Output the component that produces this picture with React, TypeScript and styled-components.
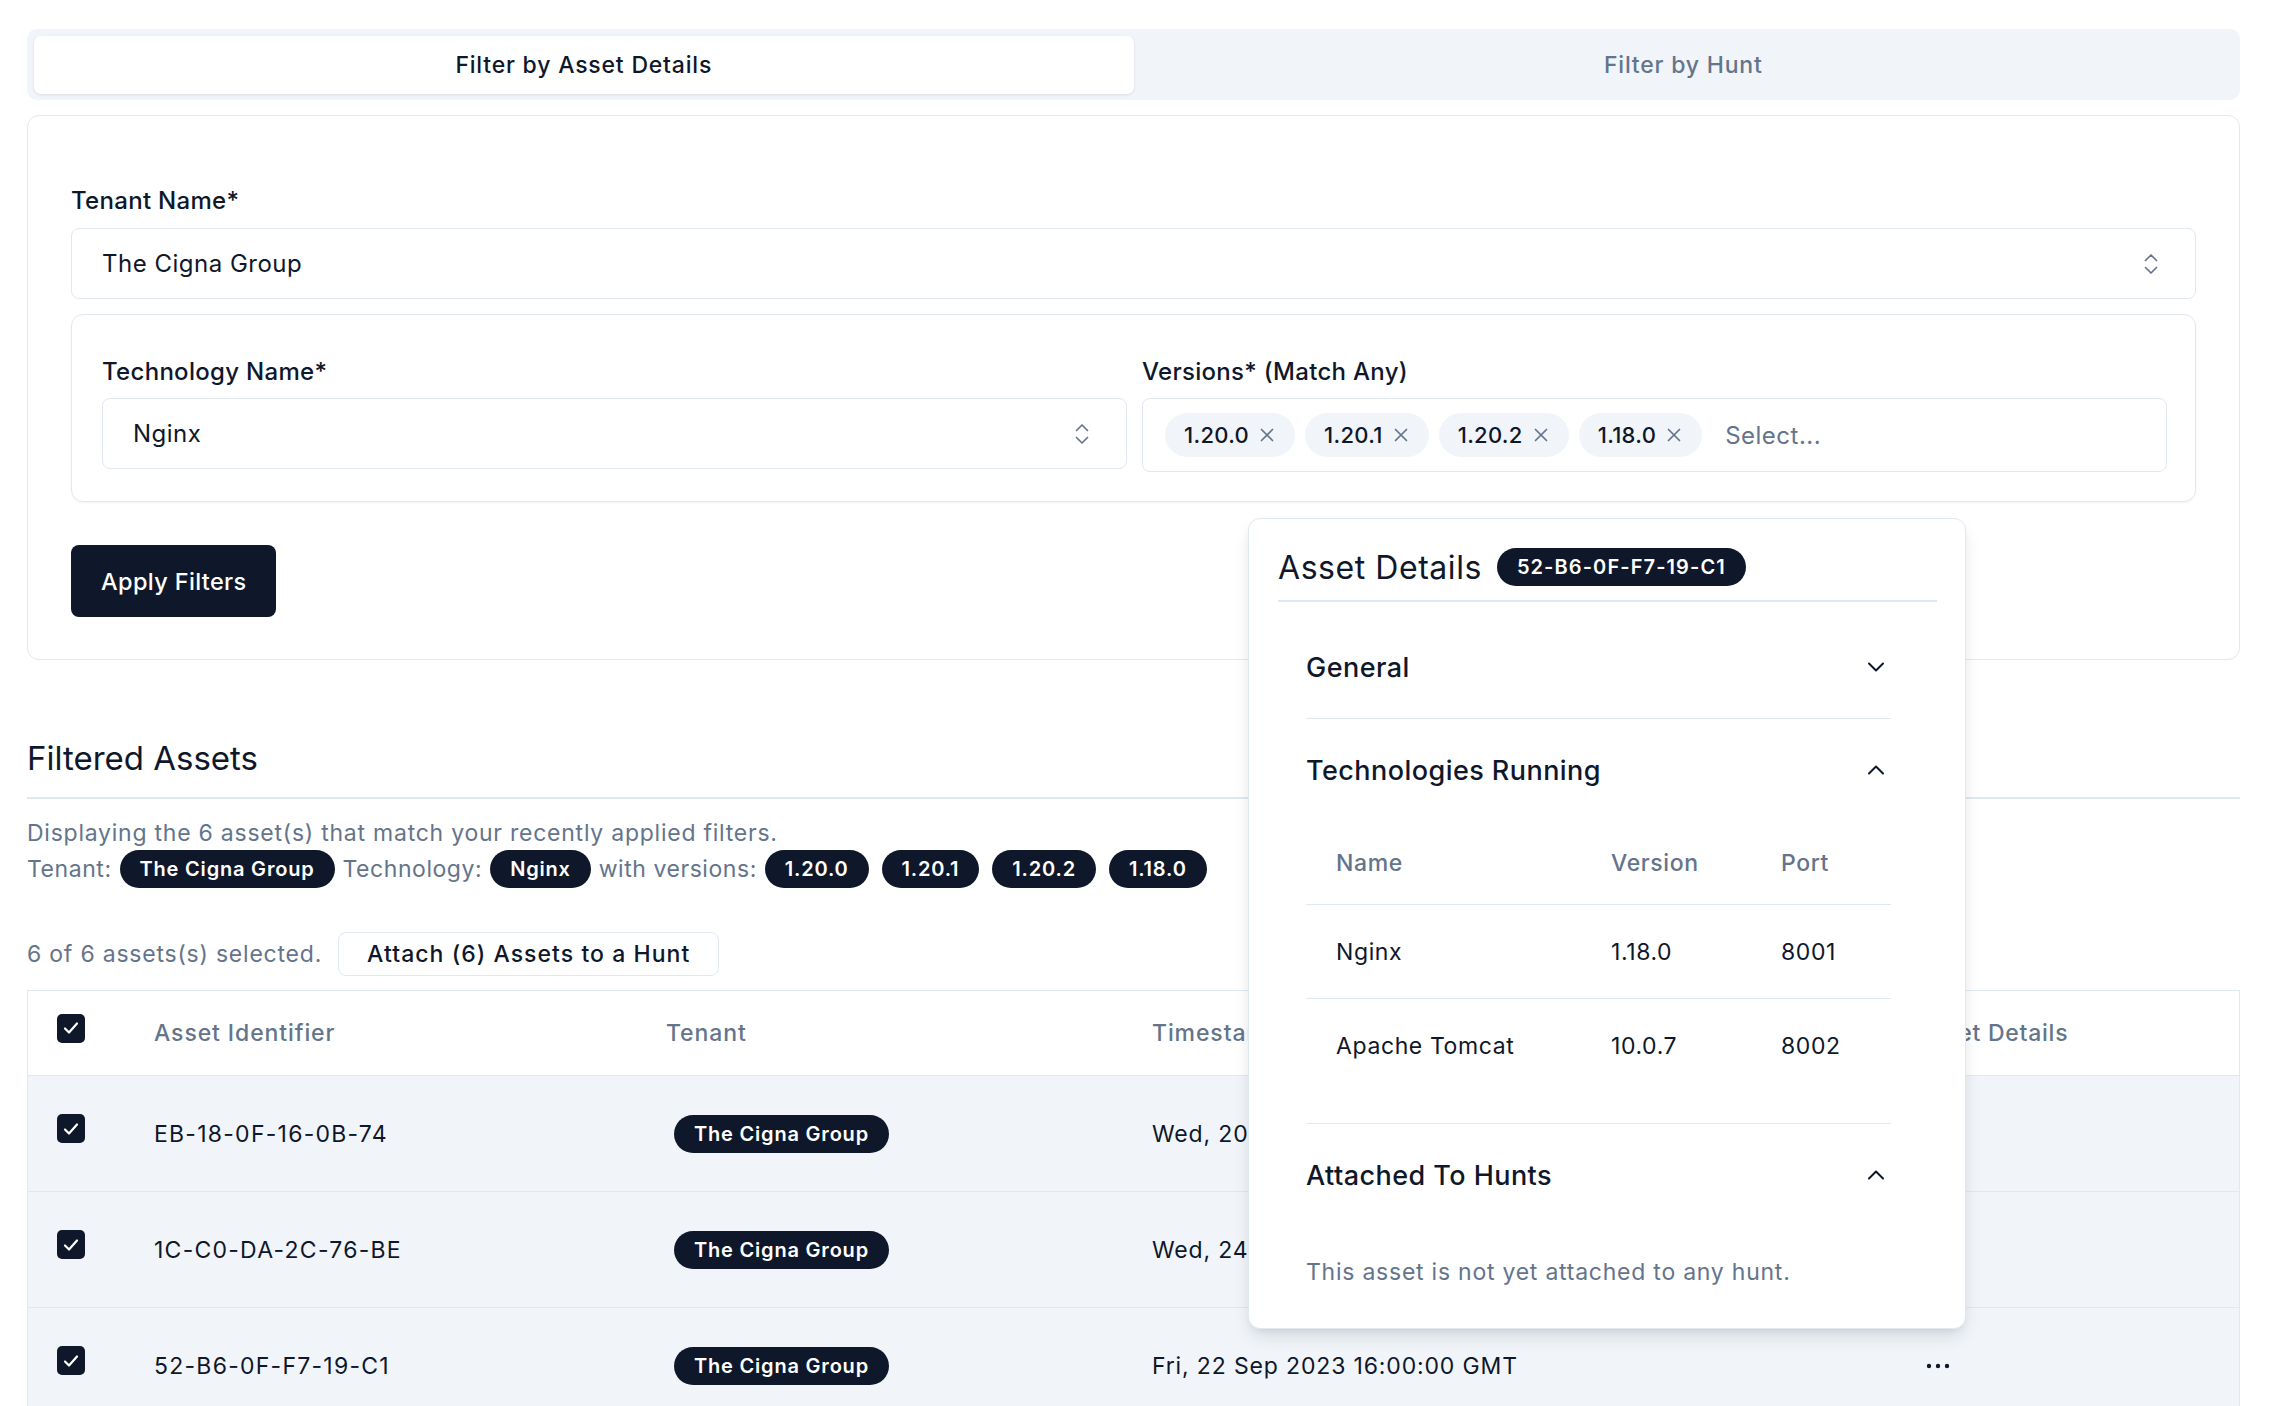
import React from "react";
import styled, { createGlobalStyle } from "styled-components";

const GlobalStyle = createGlobalStyle`
  html, body { margin: 0; padding: 0; background: #ffffff; overflow: hidden; }
  body {
    font-family: Inter, "Noto Sans", "Liberation Sans", sans-serif;
    color: #0f172a;
    -webkit-font-smoothing: antialiased;
  }
  * { box-sizing: border-box; }
`;

const Page = styled.div`
  position: relative;
  display: flex;
  flex-direction: column;
  padding: 29px 34px 0 27px;
`;

/* ---------- Tabs ---------- */
const TabList = styled.div`
  display: grid;
  grid-template-columns: 1fr 1fr;
  height: 71px;
  padding: 7px 7px 6px 7px;
  background: #f1f5f9;
  border-radius: 10px;
`;

const Tab = styled.div<{ $active?: boolean }>`
  display: flex;
  align-items: center;
  justify-content: center;
  border-radius: 7px;
  font-size: 23px;
  letter-spacing: 0.8px;
  font-weight: 500;
  color: ${(p) => (p.$active ? "#0f172a" : "#64748b")};
  background: ${(p) => (p.$active ? "#ffffff" : "transparent")};
  box-shadow: ${(p) => (p.$active ? "0 1px 3px rgba(15, 23, 42, 0.10)" : "none")};
`;

/* ---------- Filter card ---------- */
const FilterCard = styled.div`
  margin-top: 15px;
  border: 1px solid #e2e8f0;
  border-radius: 12px;
  padding: 71px 43px 42px 43px;
  display: flex;
  flex-direction: column;
  align-items: stretch;
`;

const Field = styled.div<{ $gap?: number }>`
  display: flex;
  flex-direction: column;
  gap: ${(p) => p.$gap ?? 13}px;
  min-width: 0;
`;

const FieldLabel = styled.div`
  font-size: 24px;
  line-height: 28px;
  letter-spacing: 0.3px;
  font-weight: 500;
  color: #0f172a;
`;

const SelectBox = styled.div`
  height: 71px;
  border: 1px solid #e2e8f0;
  border-radius: 8px;
  padding: 0 36px 0 30px;
  display: flex;
  align-items: center;
  justify-content: space-between;
  font-size: 24px;
  letter-spacing: 0.5px;
  color: #0f172a;
  background: #ffffff;
`;

const SubCard = styled.div`
  margin-top: 15px;
  border: 1px solid #e2e8f0;
  border-radius: 12px;
  box-shadow: 0 1px 2px rgba(15, 23, 42, 0.05);
  padding: 43px 28px 29px 30px;
  display: grid;
  grid-template-columns: 1fr 1fr;
  column-gap: 15px;
`;

const MultiBox = styled.div`
  min-height: 74px;
  border: 1px solid #e2e8f0;
  border-radius: 8px;
  padding: 14px 20px 14px 22px;
  display: flex;
  align-items: center;
  gap: 10px;
`;

const Chip = styled.span`
  height: 44px;
  border-radius: 22px;
  background: #f1f5f9;
  padding: 0 21px 0 19px;
  display: inline-flex;
  align-items: center;
  gap: 11px;
  font-size: 22px;
  letter-spacing: 0.3px;
  font-weight: 500;
  color: #0f172a;
`;

const Placeholder = styled.span`
  margin-left: 13px;
  font-size: 24px;
  letter-spacing: 0.5px;
  color: #64748b;
`;

const PrimaryButton = styled.button`
  margin-top: 43px;
  align-self: flex-start;
  height: 72px;
  padding: 0 30px;
  border: none;
  border-radius: 8px;
  background: #0f172a;
  color: #ffffff;
  font-family: inherit;
  font-size: 23.5px;
  letter-spacing: 0.35px;
  font-weight: 500;
`;

/* ---------- Filtered assets ---------- */
const SectionTitle = styled.h2`
  margin: 78px 0 0 0;
  font-size: 33px;
  line-height: 40px;
  font-weight: 400;
  color: #0f172a;
`;

const Divider = styled.div`
  height: 2px;
  background: #e2e8f0;
  margin-top: 19px;
`;

const Muted = styled.div`
  margin-top: 18px;
  font-size: 23px;
  line-height: 32px;
  letter-spacing: 0.76px;
  color: #64748b;
`;

const FilterSummary = styled.div`
  margin-top: 1px;
  display: flex;
  align-items: center;
  gap: 8px;
  font-size: 23px;
  letter-spacing: 0.55px;
  color: #64748b;
  height: 38px;
`;

const PillGroup = styled.div`
  display: flex;
  gap: 13px;
`;

const Pill = styled.span<{ $ls?: number; $offset?: number }>`
  height: 38px;
  border-radius: 19px;
  background: #0f172a;
  color: #ffffff;
  padding: 0 20px;
  margin-left: ${(p) => p.$offset ?? 0}px;
  display: inline-flex;
  align-items: center;
  font-size: 20px;
  letter-spacing: ${(p) => p.$ls ?? 0.8}px;
  font-weight: 600;
  white-space: nowrap;
`;

const SelectionRow = styled.div`
  margin-top: 44px;
  display: flex;
  align-items: center;
  gap: 16px;
  font-size: 23px;
  letter-spacing: 0.78px;
  color: #64748b;
`;

const OutlineButton = styled.button`
  height: 44px;
  padding: 0 28px;
  border: 1px solid #e2e8f0;
  border-radius: 8px;
  background: #ffffff;
  color: #0f172a;
  font-family: inherit;
  font-size: 23px;
  letter-spacing: 1.05px;
  font-weight: 500;
`;

/* ---------- Table ---------- */
const Table = styled.div`
  margin-top: 14px;
  border: 1px solid #e2e8f0;
  border-bottom: none;
`;

const Row = styled.div<{ $header?: boolean }>`
  display: grid;
  grid-template-columns: 97px 512px 486px 759px 1fr;
  height: ${(p) => (p.$header ? "85px" : "116px")};
  background: ${(p) => (p.$header ? "#ffffff" : "#f1f5f9")};
  border-bottom: 1px solid #e2e8f0;
  align-items: center;
  font-size: 23px;
  letter-spacing: ${(p) => (p.$header ? "0.9px" : "0.85px")};
  color: ${(p) => (p.$header ? "#64748b" : "#0f172a")};
  font-weight: ${(p) => (p.$header ? 500 : 400)};
`;

const Cell = styled.div`
  padding-left: 29px;
  display: flex;
  align-items: center;
  white-space: nowrap;
`;

const IdCell = styled(Cell)`
  letter-spacing: 1.25px;
`;

const DetailsHead = styled(Cell)`
  padding-left: 33px;
  letter-spacing: 0.75px;
`;

const CheckBox = styled.span`
  width: 28px;
  height: 29px;
  border-radius: 5px;
  background: #0f172a;
  display: inline-flex;
  align-items: center;
  justify-content: center;
  margin-bottom: 10px;
`;

const GhostIconButton = styled.span`
  width: 54px;
  height: 46px;
  display: inline-flex;
  align-items: center;
  justify-content: center;
`;

/* ---------- Asset details popover ---------- */
const Popover = styled.div`
  position: absolute;
  top: 518px;
  left: 1248px;
  width: 718px;
  height: 811px;
  background: #ffffff;
  border: 1px solid #e2e8f0;
  border-radius: 12px;
  box-shadow: 0 10px 18px -3px rgba(15, 23, 42, 0.12), 0 4px 8px -4px rgba(15, 23, 42, 0.1);
  padding: 29px 28px 0 29px;
  display: flex;
  flex-direction: column;
`;

const PopoverHeader = styled.div`
  height: 38px;
  display: flex;
  align-items: center;
  gap: 15px;
`;

const PopoverTitle = styled.span`
  font-size: 32px;
  letter-spacing: 0.55px;
  font-weight: 400;
  color: #0f172a;
`;

const HeaderRule = styled.div`
  margin-top: 14px;
  height: 2px;
  background: #e2e8f0;
`;

const Accordion = styled.div`
  padding: 14px 46px 0 28px;
  display: flex;
  flex-direction: column;
`;

const AccordionItem = styled.div<{ $last?: boolean }>`
  border-bottom: ${(p) => (p.$last ? "none" : "1px solid #e2e8f0")};
`;

const Trigger = styled.div`
  height: 102px;
  display: flex;
  align-items: center;
  justify-content: space-between;
  padding-right: 6px;
  font-size: 27px;
  letter-spacing: 0.45px;
  font-weight: 500;
  color: #0f172a;
`;

const ItemContent = styled.div<{ $pt?: number; $pb?: number }>`
  padding-top: ${(p) => p.$pt ?? 0}px;
  padding-bottom: ${(p) => p.$pb ?? 0}px;
`;

const MiniRow = styled.div<{ $header?: boolean; $last?: boolean }>`
  display: grid;
  grid-template-columns: 275px 170px 1fr;
  height: ${(p) => (p.$header ? "84px" : "94px")};
  align-items: center;
  border-bottom: ${(p) => (p.$last ? "none" : "1px solid #e2e8f0")};
  font-size: 23px;
  letter-spacing: 0.6px;
  font-weight: ${(p) => (p.$header ? 500 : 400)};
  color: ${(p) => (p.$header ? "#64748b" : "#0f172a")};
`;

const MiniCell = styled.div`
  padding-left: 30px;
`;

const EmptyNote = styled.div`
  font-size: 23px;
  line-height: 32px;
  letter-spacing: 0.76px;
  color: #64748b;
`;

/* ---------- Icons ---------- */
const ChevronsUpDown = () => (
  <svg width="16" height="22" viewBox="0 0 16 22" fill="none" stroke="#64748b" strokeWidth="1.7" strokeLinecap="round" strokeLinejoin="round">
    <polyline points="2.5,7.5 8,2 13.5,7.5" />
    <polyline points="2.5,14.5 8,20 13.5,14.5" />
  </svg>
);

const XIcon = () => (
  <svg width="14" height="14" viewBox="0 0 14 14" fill="none" stroke="#64748b" strokeWidth="1.7" strokeLinecap="round">
    <line x1="1.5" y1="1.5" x2="12.5" y2="12.5" />
    <line x1="12.5" y1="1.5" x2="1.5" y2="12.5" />
  </svg>
);

const CheckIcon = () => (
  <svg width="18" height="18" viewBox="0 0 18 18" fill="none" stroke="#ffffff" strokeWidth="2.2" strokeLinecap="round" strokeLinejoin="round">
    <polyline points="3,9.5 7,13.5 15,4.5" />
  </svg>
);

const Chevron = ({ up }: { up?: boolean }) => (
  <svg width="18" height="10" viewBox="0 0 18 10" fill="none" stroke="#0f172a" strokeWidth="2" strokeLinecap="round" strokeLinejoin="round">
    {up ? <polyline points="2,8.5 9,1.5 16,8.5" /> : <polyline points="2,1.5 9,8.5 16,1.5" />}
  </svg>
);

const Dots = () => (
  <svg width="24" height="6" viewBox="0 0 24 6" fill="#0f172a">
    <circle cx="3" cy="3" r="2.2" />
    <circle cx="12" cy="3" r="2.2" />
    <circle cx="21" cy="3" r="2.2" />
  </svg>
);

/* ---------- Data ---------- */
const versions = ["1.20.0", "1.20.1", "1.20.2", "1.18.0"];
const assets = [
  { id: "EB-18-0F-16-0B-74", ts: "Wed, 20 Sep 2023 16:00:00 GMT" },
  { id: "1C-C0-DA-2C-76-BE", ts: "Wed, 24 May 2023 16:00:00 GMT" },
  { id: "52-B6-0F-F7-19-C1", ts: "Fri, 22 Sep 2023 16:00:00 GMT" },
  { id: "A4-7D-19-3E-C2-58", ts: "Mon, 18 Sep 2023 16:00:00 GMT" },
  { id: "9F-02-B8-61-D4-0A", ts: "Tue, 12 Sep 2023 16:00:00 GMT" },
  { id: "3B-E6-75-0C-9A-12", ts: "Thu, 07 Sep 2023 16:00:00 GMT" },
];
const techs = [
  { name: "Nginx", version: "1.18.0", port: "8001" },
  { name: "Apache Tomcat", version: "10.0.7", port: "8002" },
];

export default function App() {
  return (
    <>
      <GlobalStyle />
      <Page>
        <TabList>
          <Tab $active>Filter by Asset Details</Tab>
          <Tab>Filter by Hunt</Tab>
        </TabList>

        <FilterCard>
          <Field>
            <FieldLabel>Tenant Name*</FieldLabel>
            <SelectBox>
              <span>The Cigna Group</span>
              <ChevronsUpDown />
            </SelectBox>
          </Field>

          <SubCard>
            <Field $gap={12}>
              <FieldLabel>Technology Name*</FieldLabel>
              <SelectBox>
                <span>Nginx</span>
                <ChevronsUpDown />
              </SelectBox>
            </Field>
            <Field $gap={12}>
              <FieldLabel>Versions* (Match Any)</FieldLabel>
              <MultiBox>
                {versions.map((v) => (
                  <Chip key={v}>
                    {v}
                    <XIcon />
                  </Chip>
                ))}
                <Placeholder>Select...</Placeholder>
              </MultiBox>
            </Field>
          </SubCard>

          <PrimaryButton>Apply Filters</PrimaryButton>
        </FilterCard>

        <SectionTitle>Filtered Assets</SectionTitle>
        <Divider />
        <Muted>Displaying the 6 asset(s) that match your recently applied filters.</Muted>
        <FilterSummary>
          <span>Tenant:</span>
          <Pill>The Cigna Group</Pill>
          <span>Technology:</span>
          <Pill>Nginx</Pill>
          <span>with versions:</span>
          <PillGroup>
            {versions.map((v) => (
              <Pill key={v}>{v}</Pill>
            ))}
          </PillGroup>
        </FilterSummary>

        <SelectionRow>
          <span>6 of 6 assets(s) selected.</span>
          <OutlineButton>Attach (6) Assets to a Hunt</OutlineButton>
        </SelectionRow>

        <Table>
          <Row $header>
            <Cell>
              <CheckBox>
                <CheckIcon />
              </CheckBox>
            </Cell>
            <Cell>Asset Identifier</Cell>
            <Cell>Tenant</Cell>
            <Cell>Timestamp</Cell>
            <DetailsHead>Asset Details</DetailsHead>
          </Row>
          {assets.map((a) => (
            <Row key={a.id}>
              <Cell>
                <CheckBox>
                  <CheckIcon />
                </CheckBox>
              </Cell>
              <IdCell>{a.id}</IdCell>
              <Cell>
                <Pill $offset={8}>The Cigna Group</Pill>
              </Cell>
              <Cell>{a.ts}</Cell>
              <Cell>
                <GhostIconButton>
                  <Dots />
                </GhostIconButton>
              </Cell>
            </Row>
          ))}
        </Table>

        <Popover>
          <PopoverHeader>
            <PopoverTitle>Asset Details</PopoverTitle>
            <Pill $ls={1.1}>52-B6-0F-F7-19-C1</Pill>
          </PopoverHeader>
          <HeaderRule />
          <Accordion>
            <AccordionItem>
              <Trigger>
                <span>General</span>
                <Chevron />
              </Trigger>
            </AccordionItem>
            <AccordionItem>
              <Trigger>
                <span>Technologies Running</span>
                <Chevron up />
              </Trigger>
              <ItemContent $pb={30}>
                <MiniRow $header>
                  <MiniCell>Name</MiniCell>
                  <MiniCell>Version</MiniCell>
                  <MiniCell>Port</MiniCell>
                </MiniRow>
                {techs.map((t, i) => (
                  <MiniRow key={t.name} $last={i === techs.length - 1}>
                    <MiniCell>{t.name}</MiniCell>
                    <MiniCell>{t.version}</MiniCell>
                    <MiniCell>{t.port}</MiniCell>
                  </MiniRow>
                ))}
              </ItemContent>
            </AccordionItem>
            <AccordionItem $last>
              <Trigger>
                <span>Attached To Hunts</span>
                <Chevron up />
              </Trigger>
              <ItemContent $pt={30}>
                <EmptyNote>This asset is not yet attached to any hunt.</EmptyNote>
              </ItemContent>
            </AccordionItem>
          </Accordion>
        </Popover>
      </Page>
    </>
  );
}
